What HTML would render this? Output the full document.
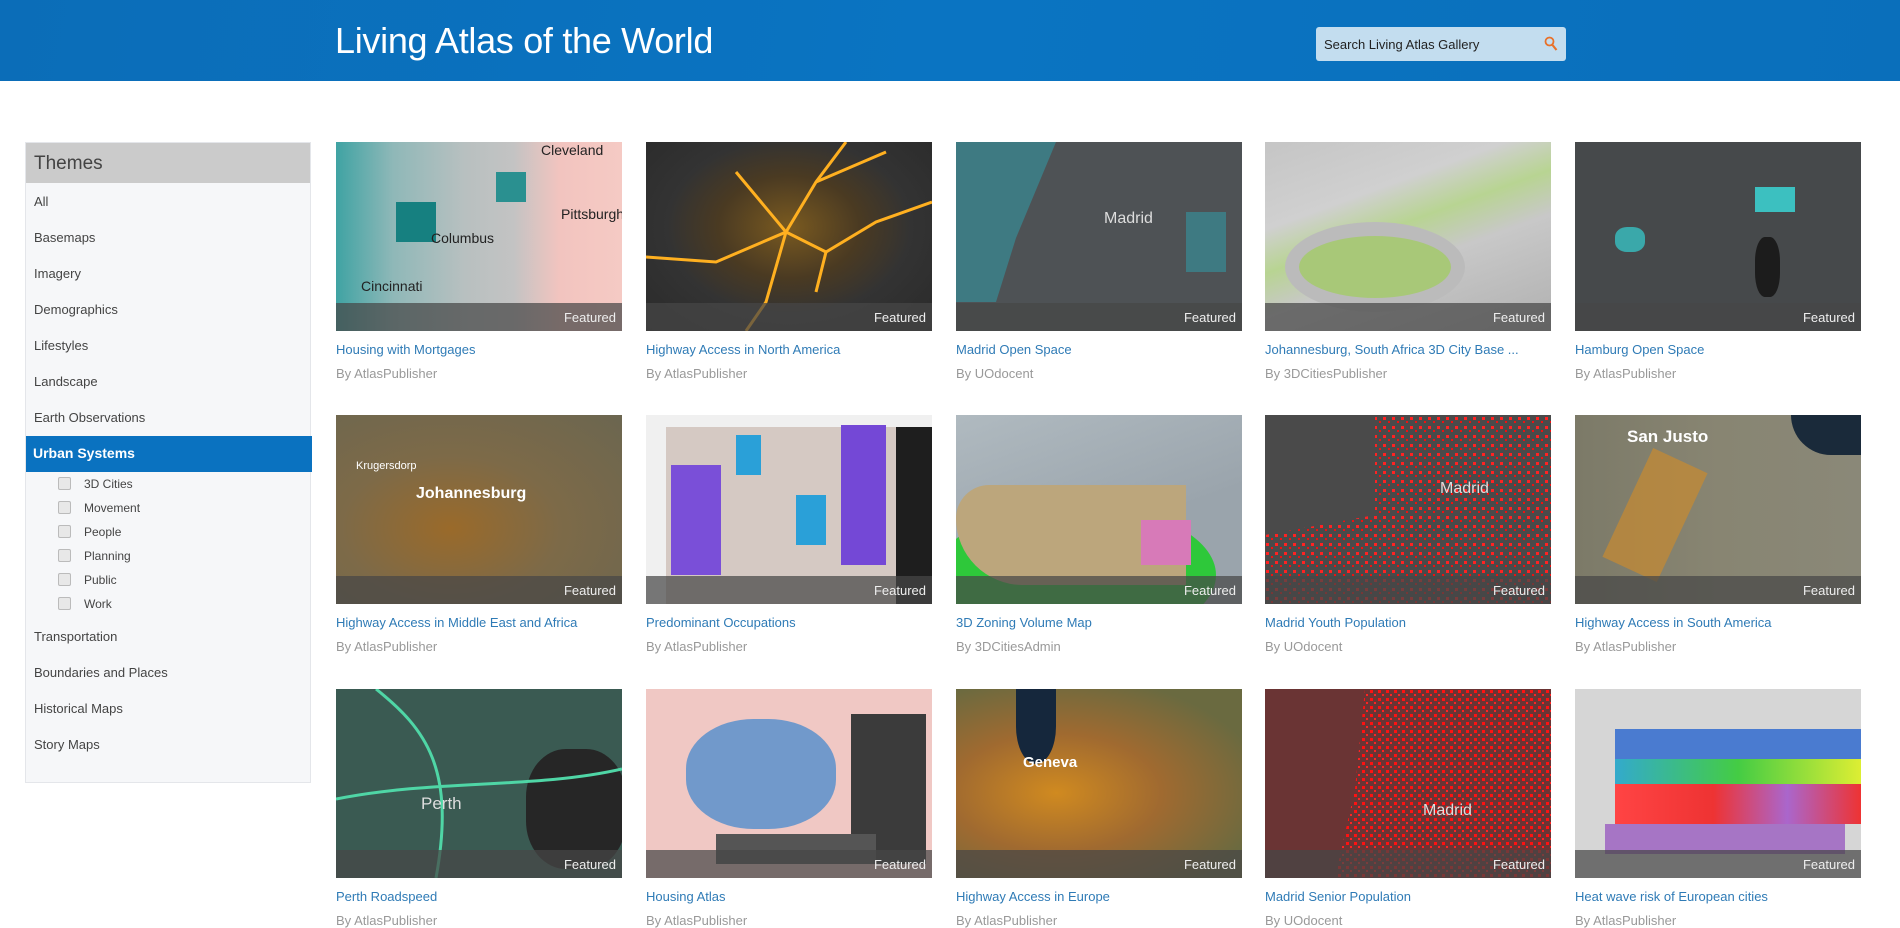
<!DOCTYPE html>
<html><head><meta charset="utf-8"><style>
*{margin:0;padding:0;box-sizing:border-box}
body{width:1900px;height:911px;overflow:hidden;background:#fff;font-family:"Liberation Sans",sans-serif;position:relative}
.hdr{position:absolute;left:0;top:0;width:1900px;height:81px;background:linear-gradient(100deg,#0b6db8,#0a74c2 50%,#0a6fbb)}
.title{position:absolute;left:335px;top:20px;color:#fff;font-size:36px;letter-spacing:-0.3px}
.search{position:absolute;left:1316px;top:27px;width:250px;height:34px;background:#c3ddef;border-radius:3px;font-size:13px;color:#222;padding:10px 8px}
.side{position:absolute;left:25px;top:142px;width:286px;height:641px;background:#f6f7f9;border:1px solid #e4e6ea}
.side .th{height:40px;background:#cbcbcb;font-size:19px;color:#444;padding:10px 8px}
.it{position:absolute;left:8px;font-size:13px;color:#444}
.sel{position:absolute;left:0;top:293px;width:286px;height:36px;background:#0a72c0;color:#fff;font-weight:bold;font-size:14px;padding:9px 7px}
.sub{position:absolute;left:58px;font-size:12px;color:#444}
.sub i{position:absolute;left:-26px;top:0;width:13px;height:13px;border:1px solid #bbb;border-radius:2px;background:#e8e8e8}
.card{position:absolute;width:286px}
.img{height:189px;position:relative;overflow:hidden}
.feat{position:absolute;left:0;bottom:0;width:100%;height:28px;background:rgba(70,70,70,.72);color:#eee;font-size:13px;text-align:right;padding:7px 6px}
.t{font-size:13px;color:#2f7bb6;margin-top:11px;white-space:nowrap}
.a{font-size:13px;color:#999;margin-top:9px}
.lbl{position:absolute;font-size:14px;color:#222}
</style></head><body>
<div class="hdr"></div>
<div class="title">Living Atlas of the World</div>
<div class="search">Search Living Atlas Gallery<svg style="position:absolute;right:8px;top:9px" width="14" height="16" viewBox="0 0 14 16"><circle cx="5.5" cy="5.5" r="4" fill="none" stroke="#e8712a" stroke-width="1.8"/><path d="M8.5 9l4 5" stroke="#e8712a" stroke-width="2.2"/></svg></div>

<div class="side">
<div class="th">Themes</div>
<div class="it" style="top:51px">All</div>
<div class="it" style="top:87px">Basemaps</div>
<div class="it" style="top:123px">Imagery</div>
<div class="it" style="top:159px">Demographics</div>
<div class="it" style="top:195px">Lifestyles</div>
<div class="it" style="top:231px">Landscape</div>
<div class="it" style="top:267px">Earth Observations</div>
<div class="sel">Urban Systems</div>
<div class="sub" style="top:334px"><i></i>3D Cities</div>
<div class="sub" style="top:358px"><i></i>Movement</div>
<div class="sub" style="top:382px"><i></i>People</div>
<div class="sub" style="top:406px"><i></i>Planning</div>
<div class="sub" style="top:430px"><i></i>Public</div>
<div class="sub" style="top:454px"><i></i>Work</div>
<div class="it" style="top:486px">Transportation</div>
<div class="it" style="top:522px">Boundaries and Places</div>
<div class="it" style="top:558px">Historical Maps</div>
<div class="it" style="top:594px">Story Maps</div>
</div>

<div class="card" style="left:336px;top:142px"><div class="img" style="background:linear-gradient(90deg,#3fa3a3 0,#8fb8b8 20%,#b8c0c0 45%,#c3c3c3 62%,#f2c4bf 78%,#f5cac4)"><div style="position:absolute;left:60px;top:60px;width:40px;height:40px;background:#168080"></div><div style="position:absolute;left:160px;top:30px;width:30px;height:30px;background:#2a9090"></div><span class="lbl" style="left:205px;top:0">Cleveland</span><span class="lbl" style="left:225px;top:64px">Pittsburgh</span><span class="lbl" style="left:95px;top:88px">Columbus</span><span class="lbl" style="left:25px;top:136px">Cincinnati</span><div class="feat">Featured</div></div><div class="t">Housing with Mortgages</div><div class="a">By AtlasPublisher</div></div>

<div class="card" style="left:646px;top:142px"><div class="img" style="background:radial-gradient(ellipse at 50% 45%,#7a5a20 0,#4a3a22 35%,#333 60%,#2a2a2a)"><svg width="286" height="189" style="position:absolute;left:0;top:0"><g stroke="#ffb020" stroke-width="3" fill="none"><path d="M0 115 L70 120 L140 90 L170 40 L200 0"/><path d="M140 90 L180 110 L230 80 L286 60"/><path d="M90 30 L140 90 L120 160 L100 189"/><path d="M170 40 L240 10"/><path d="M180 110 L170 150"/></g></svg><div class="feat">Featured</div></div><div class="t">Highway Access in North America</div><div class="a">By AtlasPublisher</div></div>

<div class="card" style="left:956px;top:142px"><div class="img" style="background:#4e5255"><div style="position:absolute;left:0;top:0;width:100px;height:160px;background:#3e7a82;clip-path:polygon(0 0,100% 0,60% 60%,40% 100%,0 100%)"></div><div style="position:absolute;left:230px;top:70px;width:40px;height:60px;background:#3e7a82"></div><span class="lbl" style="left:148px;top:68px;color:#ddd;font-size:16px">Madrid</span><div class="feat">Featured</div></div><div class="t">Madrid Open Space</div><div class="a">By UOdocent</div></div>

<div class="card" style="left:1265px;top:142px"><div class="img" style="background:linear-gradient(160deg,#c5c5c5 0,#d0d0d0 30%,#b8d492 45%,#c8c8c8 60%,#b0b0b0)"><div style="position:absolute;left:20px;top:80px;width:180px;height:90px;border-radius:50%;background:#a8c878;border:14px solid #bbb"></div><div class="feat">Featured</div></div><div class="t">Johannesburg, South Africa 3D City Base ...</div><div class="a">By 3DCitiesPublisher</div></div>

<div class="card" style="left:1575px;top:142px"><div class="img" style="background:#46494b"><div style="position:absolute;left:180px;top:45px;width:40px;height:25px;background:#3cc0c0"></div><div style="position:absolute;left:40px;top:85px;width:30px;height:25px;background:#3aa8aa;border-radius:40%"></div><div style="position:absolute;left:180px;top:95px;width:25px;height:60px;background:#1c1c1c;border-radius:40%"></div><div class="feat">Featured</div></div><div class="t">Hamburg Open Space</div><div class="a">By AtlasPublisher</div></div>

<div class="card" style="left:336px;top:415px"><div class="img" style="background:radial-gradient(ellipse at 40% 60%,#9a6a2a 0,#7d6a48 45%,#6b6650)"><span class="lbl" style="left:80px;top:70px;color:#fff;font-weight:bold;font-size:16px">Johannesburg</span><span class="lbl" style="left:20px;top:45px;color:#fff;font-size:11px">Krugersdorp</span><div class="feat">Featured</div></div><div class="t">Highway Access in Middle East and Africa</div><div class="a">By AtlasPublisher</div></div>

<div class="card" style="left:646px;top:415px"><div class="img" style="background:#f0f0f0"><div style="position:absolute;left:20px;top:12px;width:266px;height:177px;background:#d5c9c3"></div><div style="position:absolute;left:250px;top:12px;width:36px;height:177px;background:#1e1e1e"></div><div style="position:absolute;left:25px;top:50px;width:50px;height:110px;background:#7a4fd8"></div><div style="position:absolute;left:195px;top:10px;width:45px;height:140px;background:#7448d6"></div><div style="position:absolute;left:90px;top:20px;width:25px;height:40px;background:#2aa0d8"></div><div style="position:absolute;left:150px;top:80px;width:30px;height:50px;background:#2aa0d8"></div><div class="feat">Featured</div></div><div class="t">Predominant Occupations</div><div class="a">By AtlasPublisher</div></div>

<div class="card" style="left:956px;top:415px"><div class="img" style="background:linear-gradient(160deg,#b0bac0 0,#9aa4ac 60%)"><div style="position:absolute;left:-20px;top:90px;width:280px;height:140px;background:#2ec83a;border-radius:50%"></div><div style="position:absolute;left:0;top:70px;width:230px;height:100px;background:#bca67c;border-radius:40px 0 0 80px"></div><div style="position:absolute;left:185px;top:105px;width:50px;height:45px;background:#d77ab8"></div><div class="feat">Featured</div></div><div class="t">3D Zoning Volume Map</div><div class="a">By 3DCitiesAdmin</div></div>

<div class="card" style="left:1265px;top:415px"><div class="img" style="background:#4a4a4a"><svg width="286" height="189" style="position:absolute;left:0;top:0"><defs><pattern id="d" width="9" height="9" patternUnits="userSpaceOnUse"><rect x="1" y="2" width="3" height="3" fill="#f22"/><rect x="6" y="6" width="2" height="2" fill="#e11"/></pattern></defs><path d="M110 0 H286 V189 H0 V120 L110 100 Z" fill="url(#d)"/></svg><span class="lbl" style="left:175px;top:65px;color:#ddd;font-size:16px">Madrid</span><div class="feat">Featured</div></div><div class="t">Madrid Youth Population</div><div class="a">By UOdocent</div></div>

<div class="card" style="left:1575px;top:415px"><div class="img" style="background:linear-gradient(90deg,#7c7a68,#888572 50%,#8a8878);"><div style="position:absolute;right:0;top:0;width:70px;height:40px;background:#1a2a3a;border-radius:0 0 0 60px"></div><div style="position:absolute;left:50px;top:40px;width:60px;height:120px;background:#c88a30;opacity:.7;transform:rotate(25deg)"></div><span class="lbl" style="left:52px;top:12px;color:#fff;font-weight:bold;font-size:17px">San Justo</span><div class="feat">Featured</div></div><div class="t">Highway Access in South America</div><div class="a">By AtlasPublisher</div></div>

<div class="card" style="left:336px;top:689px"><div class="img" style="background:#3a5a52"><div style="position:absolute;left:190px;top:60px;width:100px;height:120px;background:#262626;border-radius:40%"></div><svg width="286" height="189" style="position:absolute;left:0;top:0"><path d="M40 0 C90 40 120 80 100 189 M0 110 C100 90 200 100 286 80" stroke="#4fd6a6" stroke-width="3" fill="none"/></svg><span class="lbl" style="left:85px;top:105px;color:#ddd;font-size:17px">Perth</span><div class="feat">Featured</div></div><div class="t">Perth Roadspeed</div><div class="a">By AtlasPublisher</div></div>

<div class="card" style="left:646px;top:689px"><div class="img" style="background:#f0c8c4"><div style="position:absolute;left:40px;top:30px;width:150px;height:110px;background:#5a90cc;border-radius:45%;opacity:.85"></div><div style="position:absolute;left:205px;top:25px;width:75px;height:150px;background:#3b3b3b"></div><div style="position:absolute;left:70px;top:145px;width:160px;height:30px;background:#555"></div><div class="feat">Featured</div></div><div class="t">Housing Atlas</div><div class="a">By AtlasPublisher</div></div>

<div class="card" style="left:956px;top:689px"><div class="img" style="background:radial-gradient(ellipse at 35% 55%,#d08a20 0,#a06a30 40%,#6a6a40 80%)"><div style="position:absolute;left:60px;top:0;width:40px;height:75px;background:#15273c;border-radius:0 0 50% 50%"></div><span class="lbl" style="left:67px;top:65px;color:#fff;font-weight:bold;font-size:15px">Geneva</span><div class="feat">Featured</div></div><div class="t">Highway Access in Europe</div><div class="a">By AtlasPublisher</div></div>

<div class="card" style="left:1265px;top:689px"><div class="img" style="background:#6a3434"><svg width="286" height="189" style="position:absolute;left:0;top:0"><defs><pattern id="e" width="8" height="8" patternUnits="userSpaceOnUse"><rect x="1" y="1" width="3" height="3" fill="#f11"/><rect x="5" y="5" width="2" height="2" fill="#f22"/></pattern></defs><path d="M100 0 H286 V189 H70 L90 100 Z" fill="url(#e)"/></svg><span class="lbl" style="left:158px;top:113px;color:#ddd;font-size:16px">Madrid</span><div class="feat">Featured</div></div><div class="t">Madrid Senior Population</div><div class="a">By UOdocent</div></div>

<div class="card" style="left:1575px;top:689px"><div class="img" style="background:#d6d6d6"><div style="position:absolute;left:40px;top:40px;width:246px;height:30px;background:#4a7bd0"></div><div style="position:absolute;left:40px;top:70px;width:246px;height:25px;background:linear-gradient(90deg,#3ac,#4c4,#de3)"></div><div style="position:absolute;left:40px;top:95px;width:246px;height:40px;background:linear-gradient(90deg,#f44,#e33 40%,#a6c 70%,#e33)"></div><div style="position:absolute;left:30px;top:135px;width:240px;height:30px;background:#9a5cc0;opacity:.8"></div><div class="feat">Featured</div></div><div class="t">Heat wave risk of European cities</div><div class="a">By AtlasPublisher</div></div>
</body></html>
